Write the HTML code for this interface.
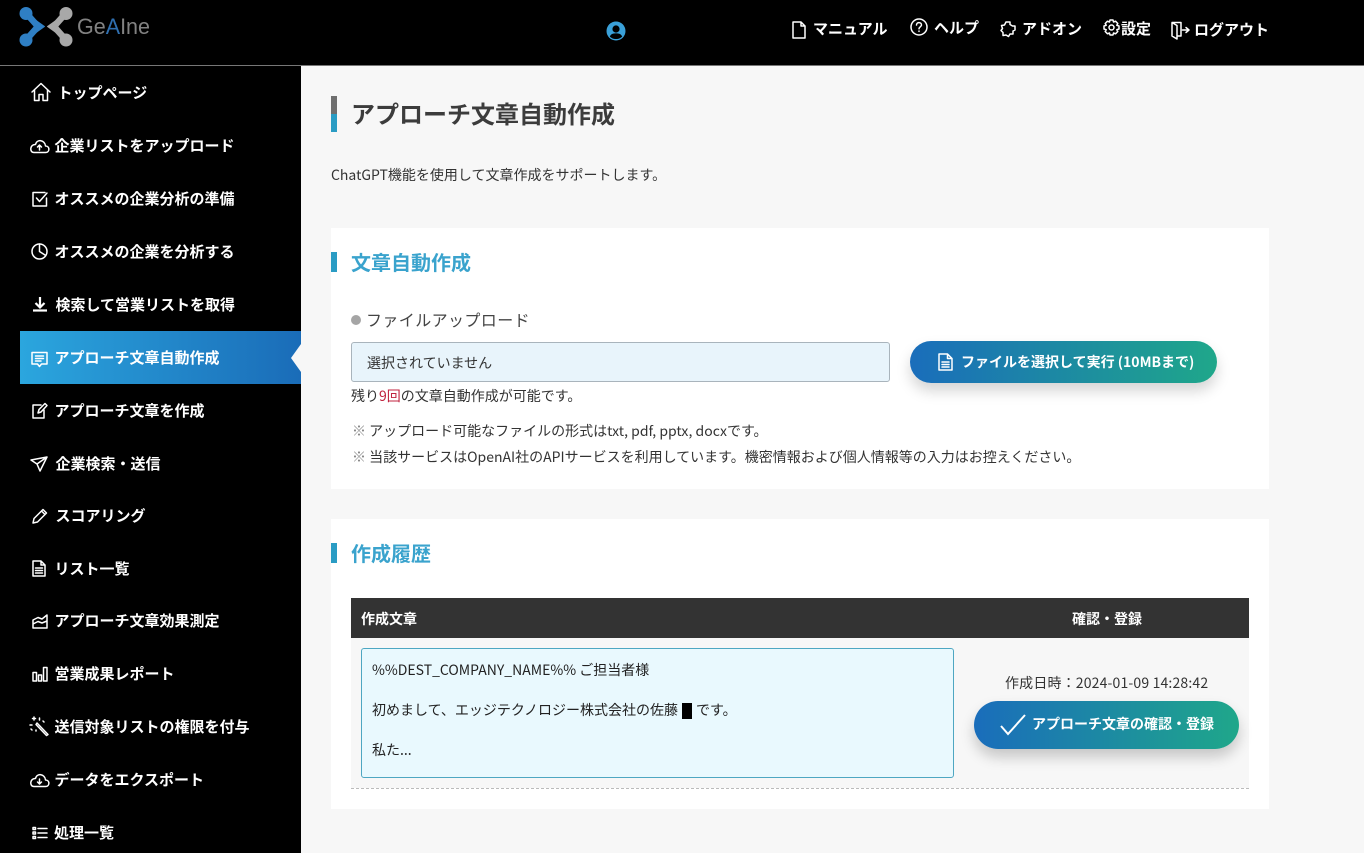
<!DOCTYPE html>
<html lang="ja"><head><meta charset="utf-8"><title>アプローチ文章自動作成</title>
<style>
*{box-sizing:border-box}
html,body{margin:0;padding:0;width:1364px;height:853px;overflow:hidden;background:#f7f7f7}
body{position:relative;font-family:"Liberation Sans","Noto Sans CJK JP",sans-serif}
.a{position:absolute;white-space:nowrap}
.t{position:absolute;white-space:nowrap;font-family:"Noto Sans CJK JP","Liberation Sans",sans-serif;line-height:20px}
.s{color:#fff;font-size:15px;font-weight:700;margin:1px 0 0 -.5px}
.h{color:#fff;font-size:15px;font-weight:700}
svg{position:absolute;overflow:visible}
.i{fill:none;stroke:#fff;stroke-width:1.5;stroke-linecap:round;stroke-linejoin:round}
.b{color:#333;font-size:14px}
</style></head><body>
<div class="a" style="left:0;top:0;width:1364px;height:65px;background:#000"></div>
<div class="a" style="left:0;top:65px;width:1364px;height:1px;background:#777"></div>
<div class="a" style="left:0;top:66px;width:301px;height:787px;background:#000"></div>

<svg style="left:0;top:0" width="160" height="56" viewBox="0 0 160 56">
<path d="M26 13L38 26.500L26 40" fill="none" stroke="#2f7fc4" stroke-width="6.500" stroke-linejoin="round"/>
<circle cx="26" cy="13.500" r="6.500" fill="#2f7fc4"/><circle cx="26" cy="40" r="6.500" fill="#2f7fc4"/>
<path d="M34 19L44.500 26.500L34 34Z" fill="#2f7fc4" stroke="#2f7fc4" stroke-width="1" stroke-linejoin="round"/>
<path d="M66 13L54 26.500L66 40" fill="none" stroke="#a8a8a8" stroke-width="6.500" stroke-linejoin="round"/>
<circle cx="66" cy="13.500" r="6.500" fill="#a8a8a8"/><circle cx="66" cy="40" r="6.500" fill="#a8a8a8"/>
<path d="M58 19L47.500 26.500L58 34Z" fill="#a8a8a8" stroke="#a8a8a8" stroke-width="1" stroke-linejoin="round"/>
<text x="77" y="34" font-family="Liberation Sans" font-size="22" fill="#828282" textLength="73" lengthAdjust="spacingAndGlyphs">Ge<tspan fill="#2f6fb0">A</tspan>Ine</text>
</svg>

<svg style="left:606px;top:21px" width="20" height="20" viewBox="0 0 20 20"><circle cx="10" cy="10" r="9.500" fill="#3aa0d8"/><circle cx="10" cy="8" r="3.600" fill="#000"/><path d="M3.800 15.500C5 12.800 7.500 12.400 10 12.400s5 .4 6.200 3.100A8 8 0 0 1 10 18a8 8 0 0 1-6.200-2.500Z" fill="#000"/></svg>

<svg class="i" style="left:792px;top:21px" width="14" height="18" viewBox="0 0 14 18"><path d="M1 1H9L13 5V17H1ZM9 1V5H13"/></svg>
<div class="t h" style="left:813px;top:19px">マニュアル</div>
<svg class="i" style="left:910px;top:18px" width="18" height="18" viewBox="0 0 18 18"><circle cx="9" cy="9" r="8"/><path d="M6.500 7C6.500 5.300 7.800 4.600 9 4.600S11.500 5.400 11.500 7C11.500 8.800 9 8.800 9 10.800M9 13V13.400"/></svg>
<div class="t h" style="left:934px;top:18px">ヘルプ</div>
<svg class="i" style="left:999px;top:20px" width="18" height="18" viewBox="0 0 18 18"><path d="M7 2H11V4.500L13.500 6H16V10L14 11V14H11L9.500 16.500L7 15L4 15.500V12.500L2 10.500L3.500 8.500L2.500 5.500L5.500 5Z"/></svg>
<div class="t h" style="left:1022px;top:19px">アドオン</div>
<svg class="i" style="left:1103px;top:19px" width="17" height="17" viewBox="0 0 17 17"><circle cx="8.500" cy="8.500" r="2.500"/><path d="M7 1H10L10.500 3L12.500 2.200L14.800 4.500L13.800 6.300L16 7V10L13.800 10.700L14.800 12.500L12.500 14.800L10.500 14L10 16H7L6.500 14L4.500 14.800L2.200 12.500L3.200 10.700L1 10V7L3.200 6.300L2.200 4.500L4.500 2.200L6.500 3Z"/></svg>
<div class="t h" style="left:1121px;top:19px">設定</div>
<svg class="i" style="left:1171px;top:21px" width="20" height="19" viewBox="0 0 20 19"><path d="M1 1.500H10V15H6M1 1.500V15L6 18V4.500L1 1.500M11.500 9H17M15 6.500L18 9L15 11.500"/></svg>
<div class="t h" style="left:1194px;top:20px">ログアウト</div>

<div class="a" style="left:20px;top:331px;width:281px;height:53px;background:linear-gradient(90deg,#2ba6de,#1a6cb8)"></div>
<div class="a" style="left:291px;top:344px;width:0;height:0;border-top:14px solid transparent;border-bottom:14px solid transparent;border-right:10px solid #f7f7f7"></div>

<svg class="i" style="left:31px;top:82px" width="20" height="20" viewBox="0 0 20 20"><path d="M1 10L10 1.500L19 10M3.500 8V18.500H8V12.500H12V18.500H16.500V8"/></svg>
<div class="t s" style="left:58px;top:82px">トップページ</div>
<svg class="i" style="left:29px;top:138px" width="21" height="16" viewBox="0 0 21 16"><path d="M5 14.500H16.500C21 14.500 21 8 16.500 8C16 2 8 .5 6.500 6.500C1 6 0 14.500 5 14.500ZM10.500 12V7M8.500 9L10.500 7L12.500 9"/></svg>
<div class="t s" style="left:55px;top:135px">企業リストをアップロード</div>
<svg class="i" style="left:32px;top:191px" width="16" height="16" viewBox="0 0 16 16"><path d="M14.500 7V15H1V1.500H13M4.500 7L7.500 10.500L15 2"/></svg>
<div class="t s" style="left:55px;top:188px">オススメの企業分析の準備</div>
<svg class="i" style="left:31px;top:243px" width="17" height="17" viewBox="0 0 17 17"><circle cx="8.500" cy="8.500" r="7.500"/><path d="M8.500 1V8.500L14 12"/></svg>
<div class="t s" style="left:55px;top:241px">オススメの企業を分析する</div>
<svg style="left:33px;top:296px" width="14" height="17" viewBox="0 0 14 17"><path d="M7 1V11M2.500 7L7 11.500L11.500 7" fill="none" stroke="#fff" stroke-width="2.200"/><path d="M0 14.500H14" stroke="#fff" stroke-width="2.200"/></svg>
<div class="t s" style="left:56px;top:294px">検索して営業リストを取得</div>
<svg class="i" style="left:31px;top:351px" width="17" height="17" viewBox="0 0 17 17"><path d="M1 1.500H16V13H10.500L8.500 15.500L6.500 13H1ZM4.500 5H12.500M4.500 7.500H12.500M4.500 10H10"/></svg>
<div class="t s" style="left:55px;top:347px">アプローチ文章自動作成</div>
<svg class="i" style="left:32px;top:402px" width="16" height="17" viewBox="0 0 16 17"><path d="M9 3H1V16H12V8M6 11L7 7.500L13 1.500L15 3.500L9 10Z"/></svg>
<div class="t s" style="left:55px;top:400px">アプローチ文章を作成</div>
<svg class="i" style="left:30px;top:456px" width="18" height="16" viewBox="0 0 18 16"><path d="M1 4L17 1L10 15L7 8ZM7 8L17 1"/></svg>
<div class="t s" style="left:56px;top:453px">企業検索・送信</div>
<svg class="i" style="left:32px;top:508px" width="16" height="16" viewBox="0 0 16 16"><path d="M1 15L2 10.500L11 1.500L14.500 5L5.500 14ZM9.500 3L13 6.500"/></svg>
<div class="t s" style="left:56px;top:505px">スコアリング</div>
<svg class="i" style="left:32px;top:560px" width="14" height="17" viewBox="0 0 14 17"><path d="M1 1H9L13 5V16H1ZM9 1V5H13M3.500 8H10.500M3.500 10.500H10.500M3.500 13H10.500"/></svg>
<div class="t s" style="left:55px;top:558px">リスト一覧</div>
<svg class="i" style="left:32px;top:614px" width="16" height="15" viewBox="0 0 16 15"><path d="M1 14V6L6 3.500L10 5L15 1V14ZM1 14H15M1 10L6 7.500L10 9L15 7"/></svg>
<div class="t s" style="left:55px;top:610px">アプローチ文章効果測定</div>
<svg class="i" style="left:32px;top:666px" width="16" height="16" viewBox="0 0 16 16"><path d="M1 6.500H4.500V15H1ZM6.500 9H9.500V15H6.500ZM11.500 1.500H15V15H11.500Z"/></svg>
<div class="t s" style="left:55px;top:663px">営業成果レポート</div>
<svg class="i" style="left:29px;top:716px" width="20" height="20" viewBox="0 0 20 20"><path d="M8 7L19 18.500L17.500 19.500L7 8.500L8 7ZM5 1V4M3.500 2.500H6.500M1 9H3M10.500 2V4M14 5L15 6M2 13L3 14M7 14V15"/></svg>
<div class="t s" style="left:55px;top:716px">送信対象リストの権限を付与</div>
<svg class="i" style="left:29px;top:772px" width="21" height="16" viewBox="0 0 21 16"><path d="M5 14.500H16.500C21 14.500 21 8 16.500 8C16 2 8 .5 6.500 6.500C1 6 0 14.500 5 14.500ZM10.500 7V12M8.500 10L10.500 12L12.500 10"/></svg>
<div class="t s" style="left:55px;top:769px">データをエクスポート</div>
<svg class="i" style="left:32px;top:826px" width="15" height="14" viewBox="0 0 15 14"><path d="M1 1.500H3.500V3.500H1ZM1 6H3.500V8H1ZM1 10.500H3.500V12.500H1ZM6 2.500H15M6 7H15M6 11.500H15"/></svg>
<div class="t s" style="left:54.500px;top:822px">処理一覧</div>

<div class="a" style="left:331px;top:96px;width:6px;height:18px;background:#6f6f6f"></div>
<div class="a" style="left:331px;top:114px;width:6px;height:18px;background:#2a9cc4"></div>
<div class="t" style="left:351px;top:95px;font-size:24px;font-weight:700;color:#3c3c3c;line-height:36px">アプローチ文章自動作成</div>
<div class="t b" style="left:331px;top:165px">ChatGPT機能を使用して文章作成をサポートします。</div>

<div class="a" style="left:331px;top:228px;width:938px;height:261px;background:#fff"></div>
<div class="a" style="left:331px;top:252px;width:6px;height:20px;background:#2a9cc4"></div>
<div class="t" style="left:351px;top:247px;font-size:20px;font-weight:700;color:#3aa3cd;line-height:30px">文章自動作成</div>
<div class="a" style="left:351px;top:315px;width:10px;height:10px;border-radius:50%;background:#a5a5a5"></div>
<div class="t" style="left:366px;top:309px;font-size:16px;color:#444;letter-spacing:.4px">ファイルアップロード</div>
<div class="a" style="left:351px;top:342px;width:539px;height:40px;background:#e8f4fb;border:1px solid #a9b4bc;border-radius:3px"></div>
<div class="t" style="left:367px;top:353px;font-size:14px;color:#333">選択されていません</div>
<div class="t b" style="left:351px;top:386px">残り<span style="color:#c0233f">9回</span>の文章自動作成が可能です。</div>
<div class="t b" style="left:352px;top:421px"><span style="color:#888">※</span> アップロード可能なファイルの形式はtxt, pdf, pptx, docxです。</div>
<div class="t b" style="left:352px;top:447px"><span style="color:#888">※</span> 当該サービスはOpenAI社のAPIサービスを利用しています。機密情報および個人情報等の入力はお控えください。</div>
<div class="a" style="left:910px;top:341px;width:307px;height:42px;border-radius:21px;background:linear-gradient(90deg,#1a6dbb,#1fa78a);box-shadow:0 8px 14px rgba(0,0,0,.17)"></div>
<svg class="i" style="left:938px;top:353px" width="15" height="18" viewBox="0 0 15 18"><path d="M1 1H9.500L14 5.500V17H1ZM9.500 1V5.500H14M4 9H11M4 11.500H11M4 14H11"/></svg>
<div class="t" style="left:961px;top:352px;font-size:14px;font-weight:700;color:#fff">ファイルを選択して実行 (10MBまで)</div>

<div class="a" style="left:331px;top:519px;width:938px;height:290px;background:#fff"></div>
<div class="a" style="left:331px;top:543px;width:6px;height:20px;background:#2a9cc4"></div>
<div class="t" style="left:351px;top:538px;font-size:20px;font-weight:700;color:#3aa3cd;line-height:30px">作成履歴</div>
<div class="a" style="left:351px;top:598px;width:898px;height:40px;background:#333"></div>
<div class="t" style="left:361px;top:609px;font-size:14px;font-weight:700;color:#fff">作成文章</div>
<div class="t" style="left:1072px;top:609px;font-size:14px;font-weight:700;color:#fff">確認・登録</div>
<div class="a" style="left:351px;top:638px;width:898px;height:150px;background:#f7f7f7"></div>
<div class="a" style="left:351px;top:788px;width:898px;height:0;border-top:1px dashed #bbb"></div>
<div class="a" style="left:361px;top:648px;width:593px;height:130px;background:#e9f9fe;border:1px solid #4ea7c2;border-radius:3px"></div>
<div class="t" style="left:372px;top:660px;font-size:14px;color:#222">%%DEST_COMPANY_NAME%% ご担当者様</div>
<div class="t" style="left:372px;top:700px;font-size:14px;color:#222">初めまして、エッジテクノロジー株式会社の佐藤</div>
<div class="a" style="left:682px;top:703px;width:10px;height:16px;background:#000"></div>
<div class="t" style="left:696px;top:700px;font-size:14px;color:#222">です。</div>
<div class="t" style="left:372px;top:740px;font-size:14px;color:#222">私た...</div>
<div class="t" style="left:1005px;top:673px;font-size:14px;color:#333;letter-spacing:.16px">作成日時：2024-01-09 14:28:42</div>
<div class="a" style="left:974px;top:701px;width:265px;height:48px;border-radius:24px;background:linear-gradient(90deg,#1a6dbb,#1fa78a);box-shadow:0 8px 14px rgba(0,0,0,.2)"></div>
<svg style="left:1000px;top:714px" width="26" height="22" viewBox="0 0 26 22"><path d="M1 12L8 20L25 1" fill="none" stroke="#fff" stroke-width="2"/></svg>
<div class="t" style="left:1032px;top:714px;font-size:14px;font-weight:700;color:#fff">アプローチ文章の確認・登録</div>
</body></html>
